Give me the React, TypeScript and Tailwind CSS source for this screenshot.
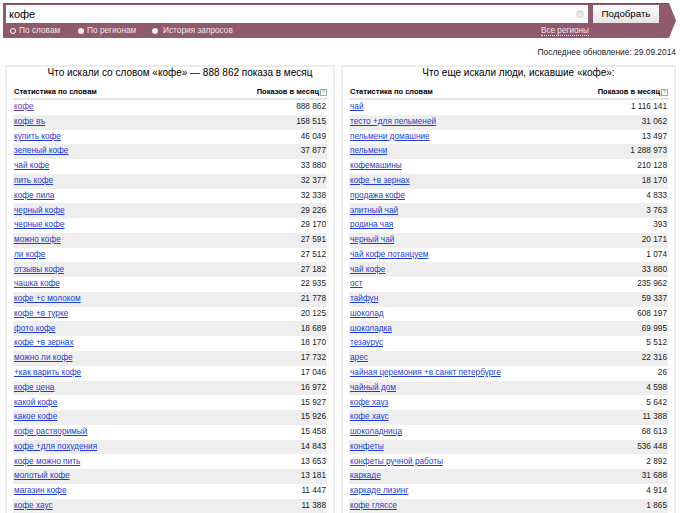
const left: [string, string, boolean?][] = [
  ['кофе', '888 862', true], ['кофе въ', '158 515'], ['купить кофе', '46 049'], ['зеленый кофе', '37 877'],
  ['чай кофе', '33 880'], ['пить кофе', '32 377'], ['кофе пила', '32 338'], ['черный кофе', '29 226'],
  ['черные кофе', '29 170'], ['можно кофе', '27 591'], ['ли кофе', '27 512'], ['отзывы кофе', '27 182'],
  ['чашка кофе', '22 935'], ['кофе +с молоком', '21 778'], ['кофе +в турке', '20 125'], ['фото кофе', '18 689'],
  ['кофе +в зернах', '18 170'], ['можно ли кофе', '17 732'], ['+как варить кофе', '17 046'], ['кофе цена', '16 972'],
  ['какой кофе', '15 927'], ['какое кофе', '15 926'], ['кофе растворимый', '15 458'], ['кофе +для похудения', '14 843'],
  ['кофе можно пить', '13 653'], ['молотый кофе', '13 181'], ['магазин кофе', '11 447'], ['кофе хаус', '11 388'],
];

const right: [string, string, boolean?][] = [
  ['чай', '1 116 141'], ['тесто +для пельменей', '31 062'], ['пельмени домашние', '13 497'], ['пельмени', '1 288 973'],
  ['кофемашины', '210 128'], ['кофе +в зернах', '18 170'], ['продажа кофе', '4 833'], ['элитный чай', '3 763'],
  ['родина чая', '393'], ['черный чай', '20 171'], ['чай кофе потанцуем', '1 074'], ['чай кофе', '33 880'],
  ['ост', '235 962'], ['тайфун', '59 337'], ['шоколад', '608 197'], ['шоколадка', '69 995'],
  ['тезаурус', '5 512'], ['арес', '22 316'], ['чайная церемония +в санкт петербурге', '26'], ['чайный дом', '4 598'],
  ['кофе хауз', '5 642'], ['кофе хаус', '11 388'], ['шоколадница', '68 613'], ['конфеты', '536 448'],
  ['конфеты ручной работы', '2 892'], ['каркаде', '31 688'], ['каркаде лизинг', '4 914'], ['кофе глясcе', '1 865'],
];

function Panel({ title, rows, className }: { title: string; rows: [string, string, boolean?][]; className: string }) {
  return (
    <div className={`border-2 border-b-0 border-[#eeeeee] px-[6px] ${className}`}>
      <h2 className="h-[19px] pl-[20px] text-center text-[10px] leading-[12px] text-black">{title}</h2>
      <div className="flex h-[14px] items-center justify-between border-b-2 border-[#e6e6e6] pl-[1px] text-[7.5px] font-bold text-black">
        <span>Статистика по словам</span>
        <span className="flex items-center">
          Показов в месяц
          <span className="ml-[1px] flex h-[7px] w-[7px] items-center justify-center border border-[#9ab0a0] text-[5px] font-normal leading-none text-[#7a8a80]">?</span>
        </span>
      </div>
      {rows.map((r, i) => (
        <div key={i} className={`flex h-[14.77px] items-center justify-between pl-[1px] pr-[1px] text-[8.25px] ${i % 2 ? 'bg-[#eeeeee]' : ''}`}>
          <a href="#" className={`underline ${r[2] ? 'text-[#6a3fb0]' : 'text-[#1f3dd0]'}`}>{r[0]}</a>
          <span className="text-[#222222]">{r[1]}</span>
        </div>
      ))}
    </div>
  );
}

export default function App() {
  return (
    <div className="h-[513px] w-[680px] overflow-hidden bg-white font-['Liberation_Sans',Arial,sans-serif]">
      <div className="flex pl-[3px] pt-[3px]">
        <div className="h-[35px] w-[665px] border-t border-[#7d4a5e] bg-[#8f5a6e] px-[3px] pt-[1px]">
          <div className="flex h-[18px] gap-[5px]">
            <div className="flex w-[582px] items-center justify-between bg-white pl-[3px] pr-[4px] text-[11px] text-black">
              <span>кофе</span>
              <span className="flex h-[8px] w-[8px] items-center justify-center rounded-full bg-[#dddddd] text-[7px] leading-none text-white">×</span>
            </div>
            <button className="w-[66px] bg-gradient-to-b from-white to-[#e4e4e4] text-[9.7px] leading-none text-black">Подобрать</button>
          </div>
          <div className="mt-[1px] flex h-[13px] items-center pl-[4px] text-[8.3px] text-[#f0e6ea]">
            <span className="flex w-[68px] items-center gap-[3px]">
              <span className="h-[6px] w-[6px] rounded-full border-[1.5px] border-white bg-[#8f5a6e]" />По словам
            </span>
            <span className="flex w-[74px] items-center gap-[3px]">
              <span className="h-[6px] w-[6px] rounded-full bg-[#eeeeee]" />По регионам
            </span>
            <span className="flex items-center gap-[5px]">
              <span className="h-[6px] w-[6px] rounded-full bg-[#eeeeee]" />История запросов
            </span>
            <span className="ml-auto mr-[76px] border-b border-dotted border-[#f0e6ea] text-[8.2px] leading-[9px]">Все регионы</span>
          </div>
        </div>
        <svg width="8" height="35" viewBox="0 0 8 35" className="shrink-0"><path d="M0 0h1l7 17.5L1 35H0z" fill="#8f5a6e" /></svg>
      </div>
      <div className="h-[27px] pr-[4px] pt-[8px] text-right text-[8.4px] leading-[12px] text-[#222222]">Последнее обновление: 29.09.2014</div>
      <div className="flex pl-[5px]">
        <Panel title="Что искали со словом «кофе» — 888 862 показа в месяц" rows={left} className="w-[330px]" />
        <Panel title="Что еще искали люди, искавшие «кофе»:" rows={right} className="ml-[6px] w-[335px]" />
      </div>
    </div>
  );
}
